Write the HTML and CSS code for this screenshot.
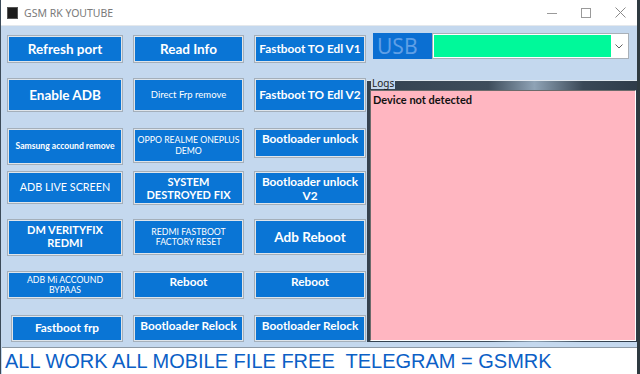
FILE: index.html
```html
<!DOCTYPE html>
<html lang="en">
<head>
  <meta charset="UTF-8">
  <title>GSM RK YOUTUBE</title>
  <link rel="stylesheet" href="styles.css">
</head>

<body>
  <div class="window">
    <!-- Title bar -->
    <header class="titlebar">
      <span class="app-icon"></span>
      <span class="title">GSM RK YOUTUBE</span>
      <div class="controls">
        <svg class="ctl ctl-min" width="10" height="10" viewBox="0 0 10 10"><path d="M0 5.5h10" stroke="#9a9a9a" stroke-width="1"/></svg>
        <svg class="ctl ctl-max" width="10" height="10" viewBox="0 0 10 10"><rect x="0.5" y="0.5" width="9" height="9" fill="none" stroke="#9a9a9a" stroke-width="1"/></svg>
        <svg class="ctl ctl-close" width="11" height="11" viewBox="0 0 11 11"><path d="M0.5 0.5l10 10M10.5 0.5l-10 10" stroke="#8a8a8a" stroke-width="1"/></svg>
      </div>
    </header>

    <div class="main">
      <!-- Action buttons -->
      <section class="buttons">
        <button class="btn big h28">Refresh port</button>
        <button class="btn big h28">Read Info</button>
        <button class="btn mid h28">Fastboot TO Edl V1</button>

        <button class="btn big h34">Enable ADB</button>
        <button class="btn small h34">Direct Frp remove</button>
        <button class="btn mid h34">Fastboot TO Edl V2</button>

        <button class="btn tiny h37">Samsung accound remove</button>
        <button class="btn small caps h35">OPPO REALME ONEPLUS<br>DEMO</button>
        <button class="btn mid h30 top">Bootloader unlock</button>

        <button class="btn plain h33">ADB LIVE SCREEN</button>
        <button class="btn mid caps h34">SYSTEM<br>DESTROYED FIX</button>
        <button class="btn mid h34 top">Bootloader unlock<br>V2</button>

        <button class="btn mid caps h37 top">DM VERITYFIX<br>REDMI</button>
        <button class="btn small caps h36">REDMI FASTBOOT<br>FACTORY RESET</button>
        <button class="btn big h36">Adb Reboot</button>

        <button class="btn small caps h28">ADB Mi ACCOUND<br>BYPAAS</button>
        <button class="btn mid h28 top">Reboot</button>
        <button class="btn mid h28 top">Reboot</button>

        <button class="btn mid h27 shift">Fastboot frp</button>
        <button class="btn mid h27 top">Bootloader Relock</button>
        <button class="btn mid h27 top">Bootloader Relock</button>
      </section>

      <!-- Port + logs -->
      <section class="side">
        <div class="port-row">
          <span class="port-label">USB</span>
          <div class="combo">
            <span class="combo-value"></span>
            <svg class="combo-arrow" width="8" height="5" viewBox="0 0 8 5"><path d="M0.5 0.5l3.5 3.5l3.5-3.5" fill="none" stroke="#606060" stroke-width="1"/></svg>
          </div>
        </div>

        <div class="logs">
          <div class="logs-head"><span class="logs-title">Logs</span></div>
          <div class="logs-box">Device not detected</div>
        </div>
      </section>
    </div>

    <footer class="footer">ALL WORK ALL MOBILE FILE FREE  TELEGRAM = GSMRK</footer>
  </div>
</body>
</html>
```

FILE: styles.css
```css
body {
  margin: 0;
  background: #2e3a40;
  font-family: "Noto Sans", "DejaVu Sans", sans-serif;
}

.window {
  width: 637px;
  height: 374px;
  display: flex;
  flex-direction: column;
  background: #c4d8ee;
  border-left: 1px solid #3b4a58;
  box-sizing: border-box;
}

.titlebar {
  height: 26px;
  display: flex;
  align-items: center;
  background: #fff;
  padding-left: 6px;
  border-bottom: 1px solid #e4e8ec;
  box-sizing: border-box;
}

.app-icon {
  width: 11px;
  height: 12px;
  background: #1c1c1c;
  border: 1px solid #555;
  box-sizing: border-box;
}

.title {
  margin-left: 6px;
  font-size: 10.5px;
  color: #7a7a7a;
}

.controls {
  margin-left: auto;
  display: flex;
  align-items: center;
  gap: 24px;
  padding-right: 11px;
}

.main {
  flex: 1;
  display: flex;
  padding: 7px 0 0 6px;
}

.buttons {
  margin-top: 2px;
  display: grid;
  grid-template-columns: 116px 111px 112px;
  grid-template-rows: 43px 50px 43px 48px 52px 44px 27px;
  column-gap: 10px;
  align-items: start;
}

.btn {
  display: flex;
  align-items: center;
  justify-content: center;
  text-align: center;
  background: #0a75d5;
  color: #fff;
  border: 1px solid #a4afba;
  box-shadow: inset 0 0 0 1px #dfe5eb;
  padding: 0;
  font-family: Lato, "Noto Sans", sans-serif;
  line-height: 1.2;
  white-space: nowrap;
  cursor: pointer;
}

.btn.top {
  align-items: flex-start;
  padding-top: 3px;
}

.btn.shift {
  margin-left: 4px;
}

.big { font-size: 13.5px; font-weight: bold; }
.mid { font-size: 11.8px; font-weight: bold; }
.small { font-size: 9.5px; }
.tiny { font-size: 8.6px; font-weight: bold; }
.plain { font-size: 10.8px; }

.mid.caps { font-size: 11px; }
.small.caps { font-size: 8.7px; }

.h27 { height: 27px; }
.h28 { height: 28px; }
.h30 { height: 30px; }
.h33 { height: 33px; }
.h34 { height: 34px; }
.h35 { height: 35px; }
.h36 { height: 36px; }
.h37 { height: 37px; }

.side {
  flex: 1;
  margin-left: 1px;
  display: flex;
  flex-direction: column;
}

.port-row {
  display: flex;
  height: 26px;
  margin-left: 6px;
  margin-right: 8px;
}

.port-label {
  width: 59px;
  background: #0b6fd2;
  color: #5f9fe6;
  font-size: 21px;
  line-height: 26px;
  padding-left: 4px;
  box-sizing: border-box;
}

.combo {
  flex: 1;
  display: flex;
  align-items: center;
  background: #fff;
  border: 1px solid #a8b0b8;
  padding: 1px;
}

.combo-value {
  flex: 1;
  align-self: stretch;
  background: #00f99a;
}

.combo-arrow {
  margin: 0 4px 0 4px;
}

.logs {
  margin-top: 19px;
  height: 264px;
  display: flex;
  flex-direction: column;
  background: linear-gradient(to right, #34414f, #3e4d5c 45%, #8fa3b6 62%, #3a4857 80%, #2f3c4a);
  border-top: 2px solid #c4d8ee;
  box-sizing: border-box;
}

.logs-head {
  height: 9px;
  border-top: 1px solid #dfe7ef;
  position: relative;
}

.logs-title {
  position: absolute;
  left: 4px;
  top: -3px;
  padding: 0 1px;
  background: #c4d8ee;
  color: #222;
  font-size: 10px;
  line-height: 11px;
}

.logs-box {
  flex: 1;
  margin: 0 1px 1px 3px;
  background: #ffb6c1;
  border-top: 1px solid #6b6b6b;
  border-left: 1px solid #6b6b6b;
  border-right: 1px solid #fff;
  border-bottom: 1px solid #fff;
  padding: 2px 2px;
  font-family: Lato, "Noto Sans", sans-serif;
  font-size: 11px;
  font-weight: bold;
  color: #111;
}

.footer {
  height: 27px;
  margin: 0 0 0 1px;
  background: #fff;
  border-top: 1px solid #8c98a4;
  box-sizing: border-box;
  white-space: pre;
  font-family: "Liberation Sans", Arial, sans-serif;
  font-size: 20px;
  line-height: 26px;
  padding-left: 3px;
  color: #0b60c6;
}
```
